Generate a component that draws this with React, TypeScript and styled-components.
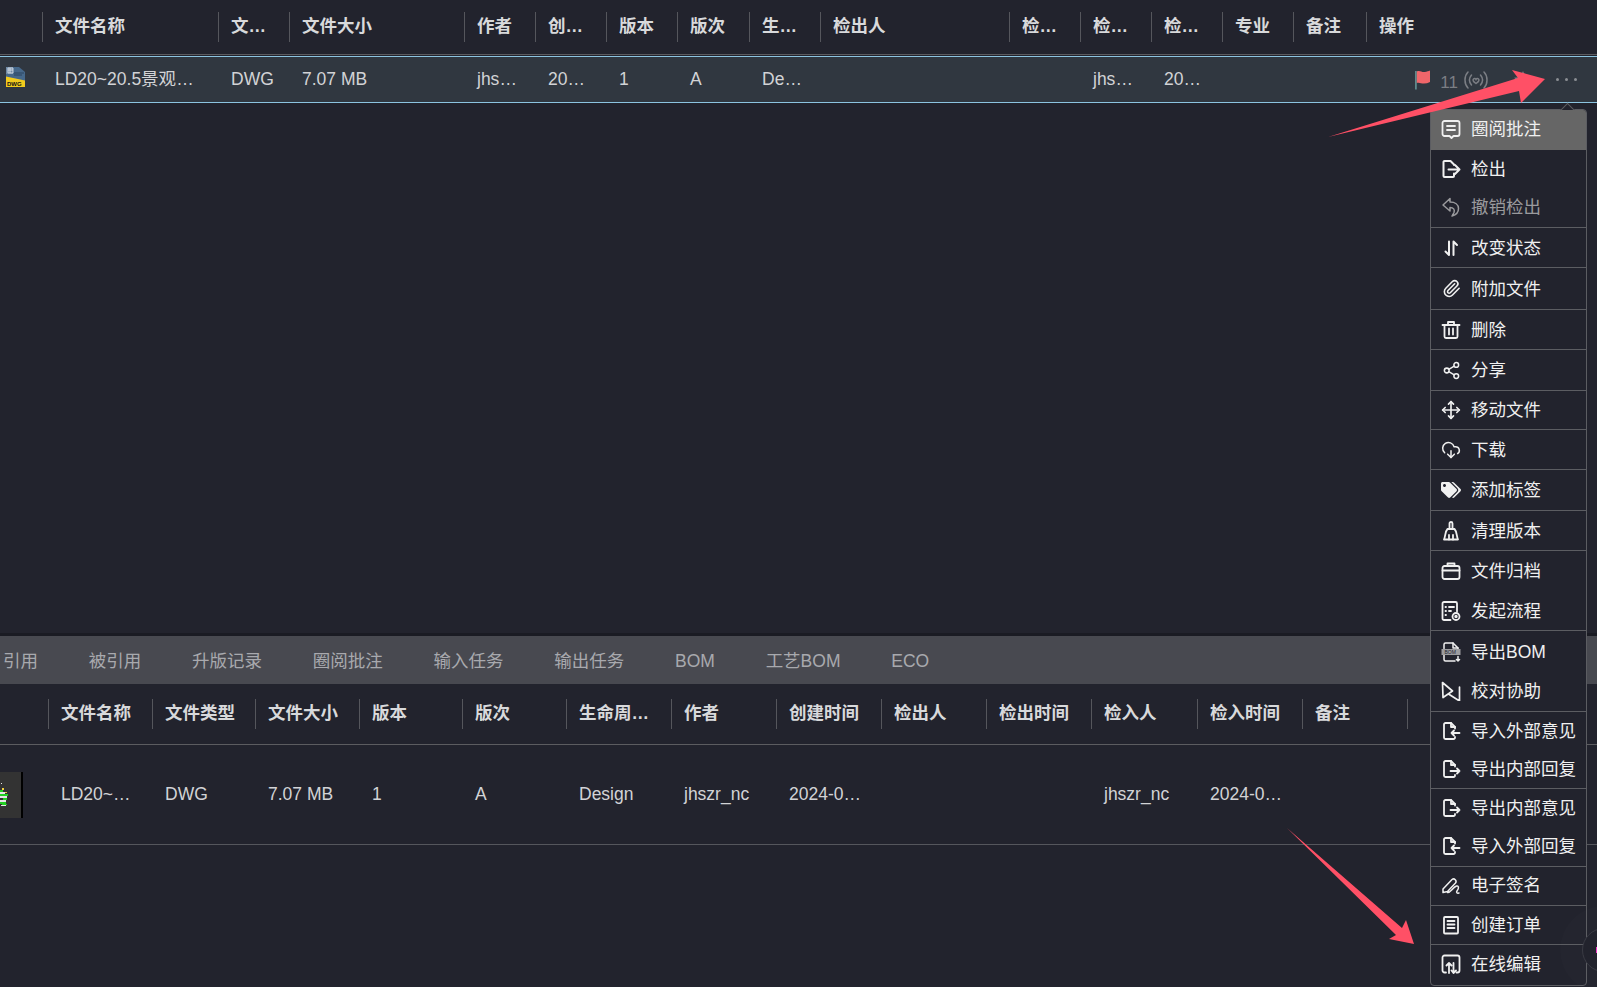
import React from 'react';
import styled, { createGlobalStyle } from 'styled-components';
import { CloudDownload, Move, Paperclip, Share2 } from 'lucide-react';
import { FaTags } from 'react-icons/fa';

const GlobalStyle = createGlobalStyle`
  html, body, #root {
    margin: 0;
    height: 100%;
    background: #22232d;
  }
  body {
    font-family: "Liberation Sans", "Noto Sans CJK SC", sans-serif;
    font-size: 17.5px;
    line-height: 24px;
    color: #d2d3d6;
    overflow: hidden;
  }
`;

const Page = styled.div`
  position: relative;
  display: flex;
  flex-direction: column;
  height: 100%;
  overflow: hidden;
`;

const TopPane = styled.section`
  flex: 1;
  min-height: 0;
`;

const BottomPane = styled.section`
  height: 303px;
`;

const Strip = styled.div`
  height: 3px;
  background: #1a1b23;
`;

const HeadRow = styled.div<{ $cols: string; $height: number }>`
  display: grid;
  grid-template-columns: ${(p) => p.$cols};
  align-items: center;
  height: ${(p) => p.$height}px;
  border-bottom: 1px solid #5c5c60;
  box-sizing: content-box;
`;

const HeadCell = styled.div`
  height: 30px;
  line-height: 28px;
  padding: 0 12px;
  border-left: 1px solid #55565c;
  font-weight: 700;
  color: #d8d9db;
  white-space: nowrap;
  overflow: hidden;
  text-overflow: ellipsis;
  min-width: 0;
  box-sizing: border-box;

  &:first-child {
    border-left: 0;
  }
`;

const BodyRow = styled.div<{ $cols: string; $height: number; $selected?: boolean }>`
  display: grid;
  grid-template-columns: ${(p) => p.$cols};
  align-items: center;
  height: ${(p) => p.$height}px;
  box-sizing: border-box;
  background: ${(p) => (p.$selected ? '#303740' : 'transparent')};
  border-bottom: 1px solid ${(p) => (p.$selected ? '#8cc4e0' : '#55565c')};
  border-top: ${(p) => (p.$selected ? '1px solid #8cc4e0' : '0')};
  margin-top: ${(p) => (p.$selected ? '1px' : '0')};
`;

const BodyCell = styled.div`
  padding: 0 13px 2px;
  white-space: nowrap;
  overflow: hidden;
  text-overflow: ellipsis;
  min-width: 0;
`;

const IconCell = styled.div<{ $left: number; $lift?: number }>`
  display: flex;
  align-items: center;
  padding-left: ${(p) => p.$left}px;
  padding-bottom: ${(p) => p.$lift ?? 0}px;
`;

const Actions = styled.div`
  display: flex;
  align-items: center;
  justify-content: flex-end;
  padding-right: 20px;
  color: #7b7e84;
`;

const Flag = styled.span`
  display: flex;
  margin-right: 9px;
  color: #f0666a;
`;

const Count = styled.span`
  font-size: 17px;
  margin-top: 6px;
  margin-right: 6px;
`;

const ActionIcon = styled.span<{ $gap: number }>`
  display: flex;
  margin-right: ${(p) => p.$gap}px;
`;

const Dots = styled.span`
  display: flex;
  gap: 6px;

  i {
    width: 3px;
    height: 3px;
    border-radius: 50%;
    background: #8b8e94;
  }
`;

const TabBar = styled.nav`
  display: flex;
  align-items: center;
  gap: 50.75px;
  height: 48px;
  box-sizing: border-box;
  padding: 1px 0 0 3px;
  background: #484950;
  color: #a8a9ae;
  white-space: nowrap;
`;

const Menu = styled.div`
  position: absolute;
  top: 109px;
  left: 1430px;
  width: 157px;
  display: flex;
  flex-direction: column;
  box-sizing: border-box;
  background: #22232d;
  border: 1px solid #5c5d62;
  border-radius: 4px;
  color: #f0f0f0;

  &::before {
    content: '';
    position: absolute;
    top: -5px;
    right: 13px;
    width: 10px;
    height: 10px;
    background: #22232d;
    border-left: 1px solid #5c5d62;
    border-top: 1px solid #5c5d62;
    transform: rotate(45deg);
  }
`;

const MenuItem = styled.div<{ $height: number; $lift: number; $active?: boolean; $disabled?: boolean; $divider?: boolean }>`
  position: relative;
  height: ${(p) => p.$height}px;
  box-sizing: border-box;
  display: flex;
  align-items: center;
  gap: 10px;
  padding-left: 10px;
  padding-bottom: ${(p) => p.$lift}px;
  white-space: nowrap;
  background: ${(p) => (p.$active ? '#666666' : 'transparent')};
  color: ${(p) => (p.$disabled ? '#9a9a9d' : '#f0f0f0')};
  border-bottom: ${(p) => (p.$divider ? '1px solid #5c5d62' : '0')};
  border-radius: ${(p) => (p.$active ? '3px 3px 0 0' : '0')};
`;

const MenuIcon = styled.span`
  flex: none;
  width: 20px;
  height: 20px;
  display: flex;
  align-items: center;
  justify-content: center;
`;

const Overlay = styled.svg`
  position: absolute;
  inset: 0;
  width: 100%;
  height: 100%;
  pointer-events: none;
`;

const Fab = styled.div`
  position: absolute;
  left: 1582px;
  top: 928px;
  width: 44px;
  height: 44px;
  border-radius: 50%;
  box-sizing: border-box;
  background: #22232d;
  border: 1px solid #3a3b44;
  box-shadow: 0 0 0 22px rgba(255, 255, 255, 0.012);

  &::after {
    content: '';
    position: absolute;
    left: 13px;
    top: 18px;
    width: 4px;
    height: 6px;
    background: #f038c8;
  }
`;

const stroke = {
  width: 20,
  height: 20,
  viewBox: '0 0 20 20',
  fill: 'none',
  stroke: 'currentColor',
  strokeWidth: 1.8,
  strokeLinecap: 'round' as const,
  strokeLinejoin: 'round' as const,
};

const FileArrow: React.FC<{ back?: boolean }> = ({ back }) => (
  <svg {...stroke}>
    <path d="M14 7.500V6l-4-4H4.500A1.500 1.500 0 0 0 3 3.500v13A1.500 1.500 0 0 0 4.500 18h8a1.500 1.500 0 0 0 1.500-1.500V16" />
    <path d="M10 2v4h4" />
    {back ? <path d="M18.500 12H10.500M13 9.500 10.500 12 13 14.500" /> : <path d="M9.500 12H18.500M16 9.500 18.500 12 16 14.500" />}
  </svg>
);

const icons: Record<string, React.ReactNode> = {
  comment: (
    <svg {...stroke}>
      <path d="M3.500 2h13A2 2 0 0 1 18.500 4v11a2 2 0 0 1-2 2h-4l-2 2-2-2h-5a2 2 0 0 1-2-2V4a2 2 0 0 1 2-2Z" />
      <path d="M6 7h8M6 11h8" />
    </svg>
  ),
  checkout: (
    <svg {...stroke} strokeWidth={2}>
      <path d="M13 6V5.500L9.500 2H3.500a1 1 0 0 0-1 1v14a1 1 0 0 0 1 1h8.500a1 1 0 0 0 1-1v-2.500" />
      <path d="M7.500 10.500H18.500M14 6l4.500 4.500L14 15" />
    </svg>
  ),
  undo: (
    <svg {...stroke} strokeWidth={1.5}>
      <path d="M9 1.500 2 8l7 6v-3.500c3.500 0 5 2 4 5l-2 3.500c4-1 6.500-4 6.500-7.500 0-4-3.500-6.500-8.500-6.500Z" />
    </svg>
  ),
  swap: (
    <svg {...stroke} strokeWidth={2}>
      <path d="M8 3.500V17L4.500 13.500M12.500 17V3.500L16 7" />
    </svg>
  ),
  clip: <Paperclip size={19} strokeWidth={2} />,
  trash: (
    <svg {...stroke}>
      <path d="M1.500 5h17M7 5V2h6v3M3.500 5v11.500A1.500 1.500 0 0 0 5 18h10a1.500 1.500 0 0 0 1.500-1.500V5M8 8.500v6M12 8.500v6" />
    </svg>
  ),
  share: <Share2 size={19} strokeWidth={1.9} />,
  move: <Move size={20} strokeWidth={2} />,
  download: <CloudDownload size={22} strokeWidth={1.8} />,
  tag: <FaTags size={20} />,
  broom: (
    <svg {...stroke}>
      <path d="M8.500 8V2.500a1.500 1.500 0 0 1 3 0V8" />
      <path d="M3 18.500c1.500-3 1-8 3.500-10.500h7c2.500 2.500 2 7.500 3.500 10.500Z" />
      <path d="M8 14v4.500M12 14v4.500" />
    </svg>
  ),
  case: (
    <svg {...stroke}>
      <rect x="1.500" y="5" width="17" height="13" rx="2" />
      <path d="M6.500 5V2.500h7V5M1.500 9.500h17" />
    </svg>
  ),
  flow: (
    <svg {...stroke}>
      <path d="M9.500 19H3A1.500 1.500 0 0 1 1.500 17.500v-15A1.500 1.500 0 0 1 3 1h11.500A1.500 1.500 0 0 1 16 2.500v8" />
      <path d="M8 6h5M8 10h2M4.500 6h.5M4.500 10h.5M4.500 14h.5" />
      <circle cx="15" cy="15.500" r="3.500" />
      <circle cx="15" cy="15.500" r="0.800" />
    </svg>
  ),
  bom: (
    <svg {...stroke} strokeWidth={1.5}>
      <path d="M3 6.500V2.500A1.500 1.500 0 0 1 4.500 1H12l5 5v.5M3 13v4.500A1.500 1.500 0 0 0 4.500 19H14" />
      <path d="M12 1v5h5" />
      <rect x="0.500" y="7" width="19" height="6" fill="#9c9c9f" stroke="none" />
      <text x="3.500" y="11.800" fontSize="5" fill="#22232d" stroke="none" fontFamily="Liberation Sans">BOM</text>
      <path d="M17 14.500V19M15.500 17.500 17 19l1.500-1.500" />
    </svg>
  ),
  compare: (
    <svg {...stroke} strokeWidth={1.7}>
      <path d="M1.500 1.500 11.500 10 2 16.500ZM18.500 6v14L7.500 13" />
    </svg>
  ),
  fileIn: <FileArrow back />,
  fileOut: <FileArrow />,
  sign: (
    <svg {...stroke} strokeWidth={1.5}>
      <path d="M2 14 11 4.500a2.500 2.500 0 0 1 3.500 3.500l-8 8.500-4.500 1ZM6.500 17.500c3 .5 5-5 9-6.500 2-.5 3 2 .5 5-1 1.500 0 2.500 2 2" />
    </svg>
  ),
  doc: (
    <svg {...stroke}>
      <rect x="3" y="2" width="14" height="16.500" rx="1" />
      <path d="M6.500 6h7M6.500 9.500h7M6.500 13h7" />
    </svg>
  ),
  edit: (
    <svg {...stroke}>
      <path d="M5 18.500H3.500A2 2 0 0 1 1.500 16.500V3.500a2 2 0 0 1 2-2h13a2 2 0 0 1 2 2v13a2 2 0 0 1-2 2H15.500" />
      <path d="M8 19V9M5.500 11.500 8 9l2.500 2.500M12.500 9v10M10.500 16.500l2 2.500 2.500-2.500" />
    </svg>
  ),
};

const menuItems = [
  { label: '圈阅批注', icon: 'comment', height: 40, lift: 2, active: true },
  { label: '检出', icon: 'checkout', height: 39, lift: 2 },
  { label: '撤销检出', icon: 'undo', height: 39, lift: 2, disabled: true, divider: true },
  { label: '改变状态', icon: 'swap', height: 40, lift: 0, divider: true },
  { label: '附加文件', icon: 'clip', height: 42, lift: 0, divider: true },
  { label: '删除', icon: 'trash', height: 40, lift: 0, divider: true },
  { label: '分享', icon: 'share', height: 41, lift: 0, divider: true },
  { label: '移动文件', icon: 'move', height: 39, lift: 0, divider: true },
  { label: '下载', icon: 'download', height: 40, lift: 0, divider: true },
  { label: '添加标签', icon: 'tag', height: 41, lift: 0, divider: true },
  { label: '清理版本', icon: 'broom', height: 40, lift: 0, divider: true },
  { label: '文件归档', icon: 'case', height: 40, lift: 0 },
  { label: '发起流程', icon: 'flow', height: 40, lift: 0, divider: true },
  { label: '导出BOM', icon: 'bom', height: 41, lift: 0 },
  { label: '校对协助', icon: 'compare', height: 40, lift: 1, divider: true },
  { label: '导入外部意见', icon: 'fileIn', height: 39, lift: 2 },
  { label: '导出内部回复', icon: 'fileOut', height: 38, lift: 2, divider: true },
  { label: '导出内部意见', icon: 'fileOut', height: 39, lift: 2 },
  { label: '导入外部回复', icon: 'fileIn', height: 39, lift: 2, divider: true },
  { label: '电子签名', icon: 'sign', height: 39, lift: 2, divider: true },
  { label: '创建订单', icon: 'doc', height: 39, lift: 1, divider: true },
  { label: '在线编辑', icon: 'edit', height: 40, lift: 2 },
];

const topCols = '42px 176px 71px 175px 71px 71px 71px 72px 71px 189px 71px 71px 71px 71px 73px 1fr';
const topHeads = ['', '文件名称', '文件类型', '文件大小', '作者', '创建时间', '版本', '版次', '生命周期', '检出人', '检出时间', '检入人', '检入时间', '专业', '备注', '操作'];
const topCells = ['LD20~20.5景观设计图纸.dwg', 'DWG', '7.07 MB', 'jhszr_nc', '2024-05-20', '1', 'A', 'Design', '', '', 'jhszr_nc', '2024-05-20', '', ''];

const bottomCols = '48px 104px 103px 104px 103px 104px 105px 105px 105px 105px 105px 106px 105px 105px 105px 1fr';
const bottomHeads = ['', '文件名称', '文件类型', '文件大小', '版本', '版次', '生命周期状态', '作者', '创建时间', '检出人', '检出时间', '检入人', '检入时间', '备注', ''];
const bottomCells = ['LD20~20.5景观设计图纸.dwg', 'DWG', '7.07 MB', '1', 'A', 'Design', 'jhszr_nc', '2024-05-20', '', '', 'jhszr_nc', '2024-05-20', ''];

const tabs = ['引用', '被引用', '升版记录', '圈阅批注', '输入任务', '输出任务', 'BOM', '工艺BOM', 'ECO'];

const DwgIcon = () => (
  <svg width="21" height="21" viewBox="0 0 21 21">
    <path d="M1 1h13l6 5v9H1Z" fill="#46688a" />
    <path d="M1 1h7v7H1Z" fill="#6f8aa6" />
    <path d="M3 2h5v5H3ZM5 2v5M3 4h5" fill="none" stroke="#dfe6ee" strokeWidth="0.800" />
    <path d="M9 7h10M9 9h8" stroke="#2b4560" strokeWidth="1.200" />
    <path d="M1 21V10.500l19 4V21Z" fill="#f2cb1d" />
    <text x="2" y="20" fontSize="6" fontWeight="700" fill="#111" fontFamily="Liberation Sans">DWG</text>
  </svg>
);

const Thumb = () => (
  <svg width="23" height="46" viewBox="0 0 23 46">
    <rect width="21" height="46" fill="#333333" />
    <rect x="21" width="2" height="46" fill="#000000" />
    <path d="M0 20h5v2H0ZM0 24h7v2H0ZM0 28h6v2H0ZM1 33h5v1H1ZM1 11h1v1H1Z" fill="#e6e6e6" />
    <path d="M0 18h3v2H0ZM0 22h8v2H0ZM3 26h4v2H3ZM0 30h6v2H0ZM2 32h5v1H2Z" fill="#22d022" />
    <path d="M2 16h2v2H2ZM5 20h2v1H5Z" fill="#f0d040" />
  </svg>
);

const App: React.FC = () => {
  return (
    <Page>
      <GlobalStyle />
      <TopPane>
        <HeadRow $cols={topCols} $height={54}>
          {topHeads.map((h, i) => (
            <HeadCell key={i}>{h}</HeadCell>
          ))}
        </HeadRow>
        <BodyRow $cols={topCols} $height={47} $selected>
          <IconCell $left={5} $lift={7}>
            <DwgIcon />
          </IconCell>
          {topCells.map((c, i) => (
            <BodyCell key={i}>{c}</BodyCell>
          ))}
          <Actions>
            <Flag>
              <svg width="17" height="20" viewBox="0 0 17 20" fill="currentColor">
                <path d="M1 1h1.800v18.500H1Z" fill="#5f8a8c" />
                <path d="M2.800 1.500c3-1.500 5 1 8 .5 2-.3 4-1 5.200-1.500v11.500c-2 1-4 1.500-6 1.500-3 0-5-1.500-7.200-.5Z" />
              </svg>
            </Flag>
            <Count>11</Count>
            <ActionIcon $gap={24}>
              <svg width="24" height="18" viewBox="0 0 24 18" fill="none" stroke="currentColor" strokeWidth="1.500" strokeLinecap="round">
                <path d="M4 1C0 5 0 13 4 17M7.500 4c-2.500 3-2.500 7 0 10M20 1c4 4 4 12 0 16M16.500 4c2.500 3 2.500 7 0 10" />
                <path d="M12 12.500c-3-2-3.500-3.500-2.500-4.500s2-.5 2.500.5c.5-1 1.500-1.500 2.500-.5s.5 2.500-2.500 4.500Z" />
              </svg>
            </ActionIcon>
            <ActionIcon $gap={22}>
              <svg width="22" height="22" viewBox="0 0 22 22" fill="currentColor">
                <path d="m11 2 2.800 6 6.200.8-4.500 4.300 1.100 6.400L11 16.400l-5.600 3.100 1.100-6.400L2 8.800 8.200 8Z" />
              </svg>
            </ActionIcon>
            <Dots>
              <i />
              <i />
              <i />
            </Dots>
          </Actions>
        </BodyRow>
      </TopPane>
      <Strip />
      <TabBar>
        {tabs.map((t) => (
          <span key={t}>{t}</span>
        ))}
      </TabBar>
      <BottomPane>
        <HeadRow $cols={bottomCols} $height={60}>
          {bottomHeads.map((h, i) => (
            <HeadCell key={i}>{h}</HeadCell>
          ))}
        </HeadRow>
        <BodyRow $cols={bottomCols} $height={100}>
          <IconCell $left={0}>
            <Thumb />
          </IconCell>
          {bottomCells.map((c, i) => (
            <BodyCell key={i}>{c}</BodyCell>
          ))}
        </BodyRow>
      </BottomPane>
      <Menu>
        {menuItems.map((m) => (
          <MenuItem key={m.label} $height={m.height} $lift={m.lift} $active={m.active} $disabled={m.disabled} $divider={m.divider}>
            <MenuIcon>{icons[m.icon]}</MenuIcon>
            {m.label}
          </MenuItem>
        ))}
      </Menu>
      <Fab />
      <Overlay viewBox="0 0 1597 987">
        <path d="M1328 137 1518 78 1512 70 1545 79 1521 103 1519 91Z" fill="#ff5066" />
        <path d="M1287 828 1402 928 1406 920 1414 944 1389 939 1396 935Z" fill="#ff5066" />
      </Overlay>
    </Page>
  );
};

export default App;
